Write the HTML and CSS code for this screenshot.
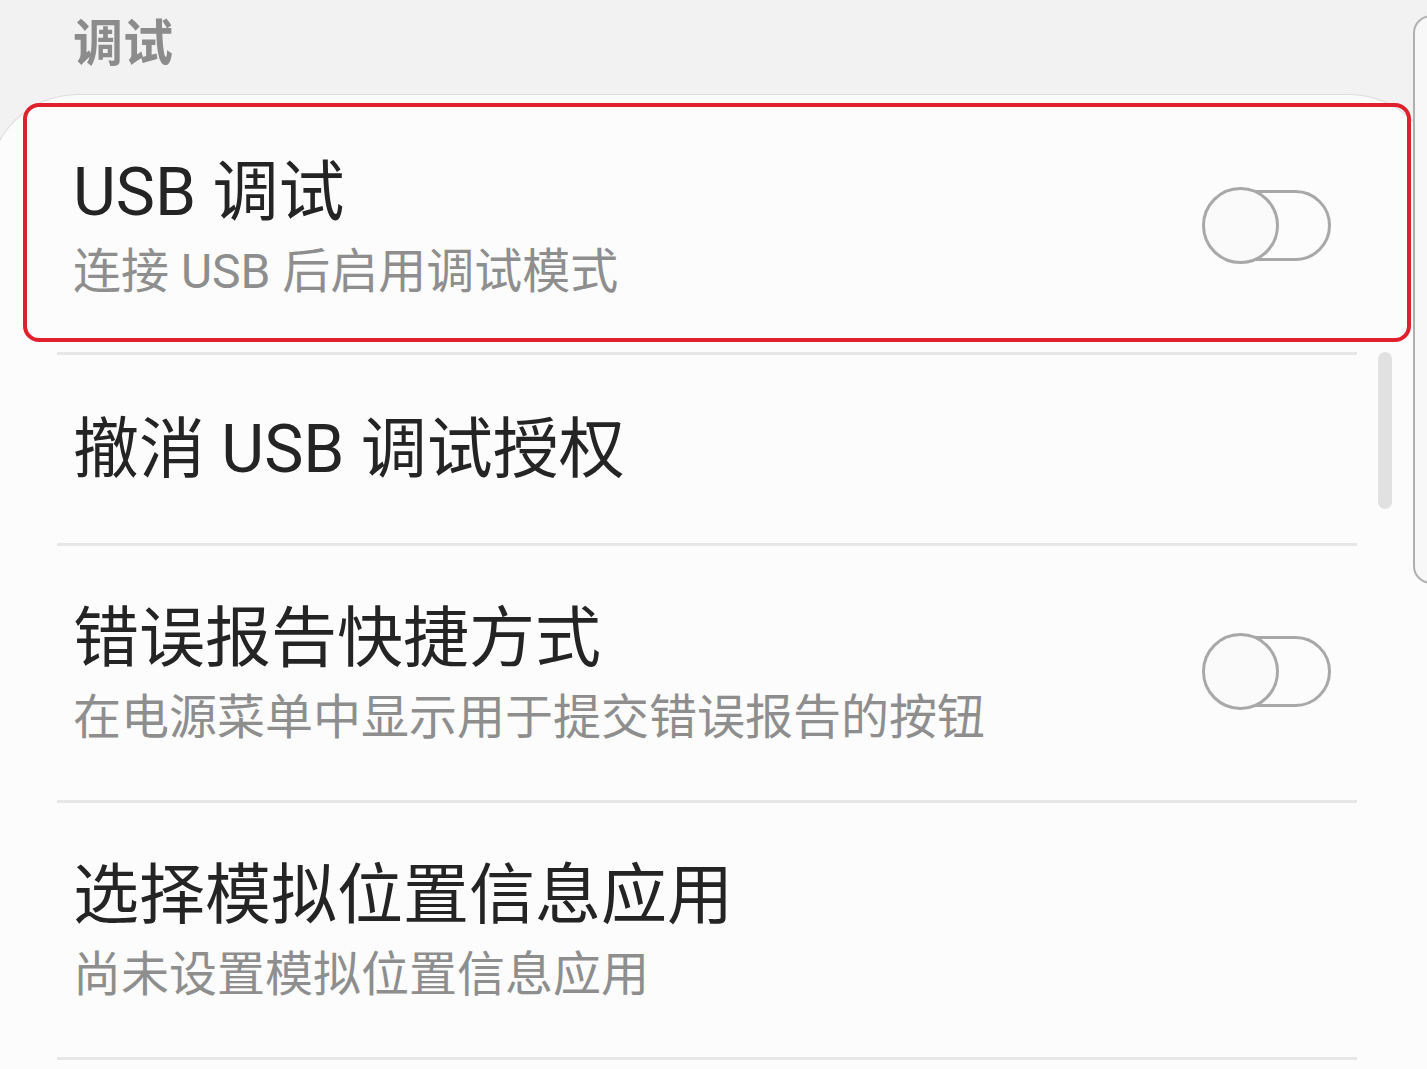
FILE: index.html
```html
<!DOCTYPE html>
<html lang="zh-CN">
<head>
<meta charset="utf-8">
<title>调试</title>
<link rel="stylesheet" href="styles.css">
</head>
<body>
<div class="screen">
  <div class="section-header">调试</div>
  <div class="card">
    <div class="row row-first">
      <div class="texts">
        <div class="title">USB 调试</div>
        <div class="sub">连接 USB 后启用调试模式</div>
      </div>
      <div class="toggle"><div class="track"></div><div class="knob"></div></div>
      <div class="highlight"></div>
    </div>
    <div class="row row-single">
      <div class="texts">
        <div class="title">撤消 USB 调试授权</div>
      </div>
    </div>
    <div class="row">
      <div class="texts">
        <div class="title">错误报告快捷方式</div>
        <div class="sub">在电源菜单中显示用于提交错误报告的按钮</div>
      </div>
      <div class="toggle"><div class="track"></div><div class="knob"></div></div>
    </div>
    <div class="row">
      <div class="texts">
        <div class="title">选择模拟位置信息应用</div>
        <div class="sub">尚未设置模拟位置信息应用</div>
      </div>
    </div>
  </div>
  <div class="scrollbar"></div>
  <div class="side-panel"></div>
</div>
</body>
</html>
```
FILE: styles.css
```css
html, body {
  margin: 0;
  padding: 0;
}
body {
  background: #f2f2f2;
  font-family: "Roboto", "Noto Sans CJK SC", sans-serif;
  overflow: hidden;
}
.screen {
  position: relative;
  width: 1427px;
  height: 1069px;
  overflow: hidden;
}
.section-header {
  height: 94px;
  padding-left: 73px;
  font-family: "Noto Sans CJK SC", sans-serif;
  font-weight: 700;
  font-size: 50px;
  line-height: 78px;
  color: #8c8c8c;
  box-sizing: border-box;
}
.card {
  margin: 0 -12px;
  background: #fcfcfc;
  border: 1px solid #dcdcdc;
  border-bottom: none;
  border-radius: 90px 90px 0 0;
  padding: 0 81px 0 68px;
  height: 1100px;
}
.row {
  position: relative;
  display: flex;
  align-items: center;
  padding: 53px 26px 43px 16px;
  border-bottom: 3px solid #e7e7e7;
}
.row-first {
  padding-top: 58px;
  padding-bottom: 41px;
}
.row-single {
  padding-top: 55px;
  padding-bottom: 53px;
}
.texts {
  flex: 1;
  min-width: 0;
}
.title {
  font-size: 66px;
  line-height: 80px;
  color: #242424;
  white-space: nowrap;
}
.sub {
  font-size: 48px;
  line-height: 78px;
  color: #8e8e8e;
  white-space: nowrap;
}
.toggle {
  position: relative;
  width: 129px;
  height: 77px;
  flex: none;
  margin-bottom: 14px;
}
.track {
  margin: 3px 0 0 3px;
  height: 71px;
  box-sizing: border-box;
  border: 3px solid #a8a8a8;
  border-radius: 36px;
}
.knob {
  position: absolute;
  left: 0;
  top: 0;
  width: 77px;
  height: 77px;
  box-sizing: border-box;
  border: 3px solid #a8a8a8;
  border-radius: 50%;
  background: #fafafa;
}
.highlight {
  position: absolute;
  left: -34px;
  right: -54px;
  top: 8px;
  bottom: 10px;
  border: 4px solid #e1202d;
  border-radius: 16px;
  pointer-events: none;
}
.scrollbar {
  position: absolute;
  left: 1378px;
  top: 352px;
  width: 14px;
  height: 157px;
  border-radius: 7px;
  background: #e1e1e1;
}
.side-panel {
  position: absolute;
  left: 1413px;
  top: 15px;
  width: 40px;
  height: 569px;
  box-sizing: border-box;
  border: 2px solid #b0b0b0;
  border-radius: 18px;
  background: #f8f8f8;
}
```
